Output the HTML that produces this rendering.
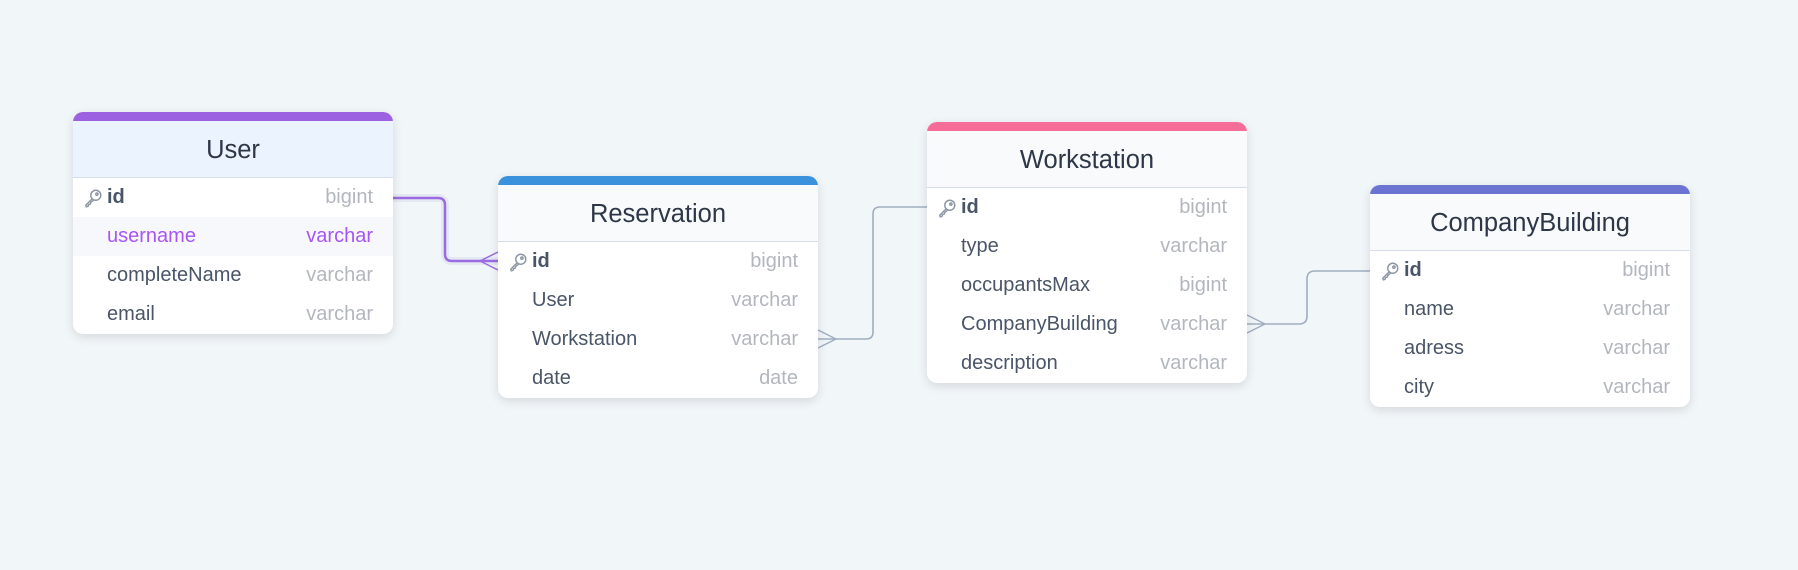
<!DOCTYPE html>
<html><head><meta charset="utf-8"><style>
body{margin:0;width:1798px;height:570px;background:#f1f6f9;font-family:"Liberation Sans",sans-serif;position:relative;overflow:hidden}
.t{position:absolute;width:320px;background:#fff;border-radius:10px;box-shadow:0 3px 10px rgba(0,0,0,.12);overflow:hidden}
.bar{height:9px}
.h{background:#f8fafc;border-bottom:1.5px solid #d6dee9;display:flex;align-items:center;justify-content:center;font-size:25.5px;color:#2d3748;box-sizing:border-box;height:57px;padding-top:3px}
.r{height:39px;display:flex;align-items:center;justify-content:space-between;padding:0 20px 0 34px;font-size:20px;color:#4a5568;position:relative}
.r .ty{color:#b3b7bd}
.r.k b{font-weight:bold;color:#4a5568}
.key{position:absolute;left:10px;top:10px}
</style></head><body>
<svg width="1798" height="570" style="position:absolute;left:0;top:0">
<g fill="none" stroke-linejoin="round">
<path d="M393 198 H438 Q445 198 445 205 V254 Q445 261 452 261 H498" stroke="#e4e9f1" stroke-width="8"/>
<path d="M393 198 H438 Q445 198 445 205 V254 Q445 261 452 261 H498" stroke="#9b6be3" stroke-width="2.5"/>
<path d="M498 252 L480 261 L498 270" stroke="#9b6be3" stroke-width="1.5"/>
<path d="M818 339 H866 Q873 339 873 332 V214 Q873 207 880 207 H927" stroke="#a0aec0" stroke-width="1.6"/>
<path d="M818 330 L836 339 L818 348" stroke="#a0aec0" stroke-width="1.5"/>
<path d="M1247 324 H1299 Q1307 324 1307 316 V279 Q1307 271 1315 271 H1370" stroke="#a0aec0" stroke-width="1.6"/>
<path d="M1247 315 L1265 324 L1247 333" stroke="#a0aec0" stroke-width="1.5"/>
</g></svg>

<div class="t" style="left:73px;top:112px">
<div class="bar" style="background:#9b61e0"></div>
<div class="h" style="background:#ebf3fe">User</div>
<div class="r k"><svg class="key" width="20" height="20" viewBox="0 0 18 18" fill="none" stroke="#8c96a3" stroke-width="1.3"><circle cx="11.5" cy="6.5" r="4.5"/><circle cx="12.5" cy="5.5" r="1"/><path d="M8.3 9.7 L2.5 15.5 L3 17 L4.5 16.5 L5 15 L6.5 14.5 L7 13 L9.5 11"/></svg><b>id</b><span class="ty">bigint</span></div>
<div class="r" style="background:#f6f8fb;color:#a855f7"><span>username</span><span style="color:#a855f7">varchar</span></div>
<div class="r"><span>completeName</span><span class="ty">varchar</span></div>
<div class="r"><span>email</span><span class="ty">varchar</span></div>
</div>

<div class="t" style="left:498px;top:176px">
<div class="bar" style="background:#3a91dc"></div>
<div class="h">Reservation</div>
<div class="r k"><svg class="key" width="20" height="20" viewBox="0 0 18 18" fill="none" stroke="#8c96a3" stroke-width="1.3"><circle cx="11.5" cy="6.5" r="4.5"/><circle cx="12.5" cy="5.5" r="1"/><path d="M8.3 9.7 L2.5 15.5 L3 17 L4.5 16.5 L5 15 L6.5 14.5 L7 13 L9.5 11"/></svg><b>id</b><span class="ty">bigint</span></div>
<div class="r"><span>User</span><span class="ty">varchar</span></div>
<div class="r"><span>Workstation</span><span class="ty">varchar</span></div>
<div class="r"><span>date</span><span class="ty">date</span></div>
</div>

<div class="t" style="left:927px;top:122px">
<div class="bar" style="background:#f56d98"></div>
<div class="h">Workstation</div>
<div class="r k"><svg class="key" width="20" height="20" viewBox="0 0 18 18" fill="none" stroke="#8c96a3" stroke-width="1.3"><circle cx="11.5" cy="6.5" r="4.5"/><circle cx="12.5" cy="5.5" r="1"/><path d="M8.3 9.7 L2.5 15.5 L3 17 L4.5 16.5 L5 15 L6.5 14.5 L7 13 L9.5 11"/></svg><b>id</b><span class="ty">bigint</span></div>
<div class="r"><span>type</span><span class="ty">varchar</span></div>
<div class="r"><span>occupantsMax</span><span class="ty">bigint</span></div>
<div class="r"><span>CompanyBuilding</span><span class="ty">varchar</span></div>
<div class="r"><span>description</span><span class="ty">varchar</span></div>
</div>

<div class="t" style="left:1370px;top:185px">
<div class="bar" style="background:#6b74d0"></div>
<div class="h">CompanyBuilding</div>
<div class="r k"><svg class="key" width="20" height="20" viewBox="0 0 18 18" fill="none" stroke="#8c96a3" stroke-width="1.3"><circle cx="11.5" cy="6.5" r="4.5"/><circle cx="12.5" cy="5.5" r="1"/><path d="M8.3 9.7 L2.5 15.5 L3 17 L4.5 16.5 L5 15 L6.5 14.5 L7 13 L9.5 11"/></svg><b>id</b><span class="ty">bigint</span></div>
<div class="r"><span>name</span><span class="ty">varchar</span></div>
<div class="r"><span>adress</span><span class="ty">varchar</span></div>
<div class="r"><span>city</span><span class="ty">varchar</span></div>
</div>
</body></html>
